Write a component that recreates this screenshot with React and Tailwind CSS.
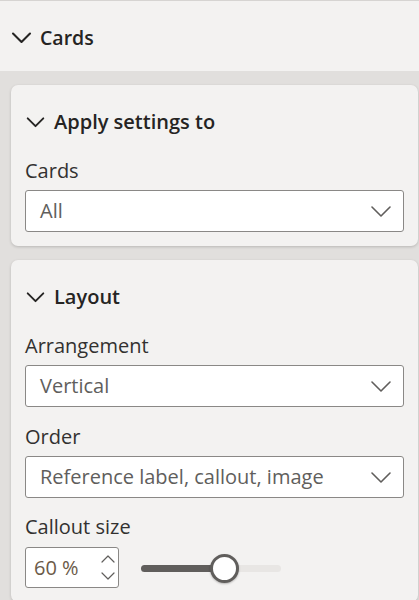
import React from "react";

const font = { fontFamily: '"Open Sans", "Noto Sans", sans-serif' };

function ChevronBold({ className }) {
  return (
    <svg className={className} viewBox="0 0 20 12" fill="none">
      <path d="M1.5 1.5 L10 10 L18.5 1.5" stroke="#252423" strokeWidth="2.1" strokeLinecap="round" strokeLinejoin="round" />
    </svg>
  );
}

function ChevronThin() {
  return (
    <svg width="20" height="11" viewBox="0 0 20 11" fill="none">
      <path d="M1 1 L10 10 L19 1" stroke="#605e5c" strokeWidth="1.6" strokeLinecap="round" strokeLinejoin="round" />
    </svg>
  );
}

function Dropdown({ value, className = "" }) {
  return (
    <div className={"flex h-[42px] items-center justify-between rounded-[3px] border border-[#8a8886] bg-white pl-[14px] pr-[12px] " + className}>
      <span className="text-[20px] text-[#605e5c]">{value}</span>
      <ChevronThin />
    </div>
  );
}

function SectionHeading({ children }) {
  return (
    <div className="flex h-[30px] items-center">
      <ChevronBold className="ml-[1px] h-[11px] w-[19px]" />
      <span className="ml-[9px] text-[20px] font-semibold text-[#252423]">{children}</span>
    </div>
  );
}

function Label({ children, className = "" }) {
  return <div className={"h-[26px] leading-[26px] text-[20px] text-[#323130] " + className}>{children}</div>;
}

export default function App() {
  return (
    <div className="h-[600px] w-[419px] overflow-hidden bg-[#e1dfdd]" style={font}>
      <div className="flex h-[71px] items-center border-t border-[#d6d4d2] bg-[#f3f2f1] pl-[11px] pt-[3px]">
        <ChevronBold className="h-[12px] w-[21px]" />
        <span className="ml-[8px] text-[19.5px] font-semibold text-[#252423]">Cards</span>
      </div>

      <div className="ml-[11px] mr-[1px] mt-[14px] rounded-[7px] bg-[#f3f2f1] px-[14px] pb-[14px] pt-[22px] shadow-[0_1px_3px_rgba(0,0,0,0.18)]">
        <SectionHeading>Apply settings to</SectionHeading>
        <Label className="mt-[21px]">Cards</Label>
        <Dropdown value="All" className="mt-[6px]" />
      </div>

      <div className="ml-[11px] mr-[1px] mt-[14px] rounded-[7px] bg-[#f3f2f1] px-[14px] pb-[14px] pt-[22px] shadow-[0_1px_3px_rgba(0,0,0,0.18)]">
        <SectionHeading>Layout</SectionHeading>
        <Label className="mt-[21px]">Arrangement</Label>
        <Dropdown value="Vertical" className="mt-[6px]" />
        <Label className="mt-[17px]">Order</Label>
        <Dropdown value="Reference label, callout, image" className="mt-[6px]" />
        <Label className="mt-[16px]">Callout size</Label>
        <div className="mt-[7px] flex items-center">
          <div className="flex h-[41px] w-[94px] items-center justify-between rounded-[3px] border border-[#8a8886] bg-white pl-[8px] pr-[3px]">
            <span className="text-[20px] text-[#6b5a48]">60 %</span>
            <div className="flex flex-col gap-[9px]">
              <svg width="14" height="8" viewBox="0 0 14 8" fill="none">
                <path d="M1 7 L7 1 L13 7" stroke="#605e5c" strokeWidth="1.2" strokeLinecap="round" strokeLinejoin="round" />
              </svg>
              <svg width="14" height="8" viewBox="0 0 14 8" fill="none">
                <path d="M1 1 L7 7 L13 1" stroke="#605e5c" strokeWidth="1.2" strokeLinecap="round" strokeLinejoin="round" />
              </svg>
            </div>
          </div>
          <div className="relative ml-[22px] h-[30px] w-[140px]">
            <div className="absolute left-0 right-0 top-[12px] h-[7px] rounded-full bg-[#e8e6e4]" />
            <div className="absolute left-0 top-[12px] h-[7px] w-[84px] rounded-full bg-[#605e5c]" />
            <div className="absolute left-[69px] top-[1px] h-[29px] w-[29px] rounded-full border-[3px] border-[#605e5c] bg-white shadow-[0_1px_2px_rgba(0,0,0,0.25)]" />
          </div>
        </div>
      </div>
    </div>
  );
}
